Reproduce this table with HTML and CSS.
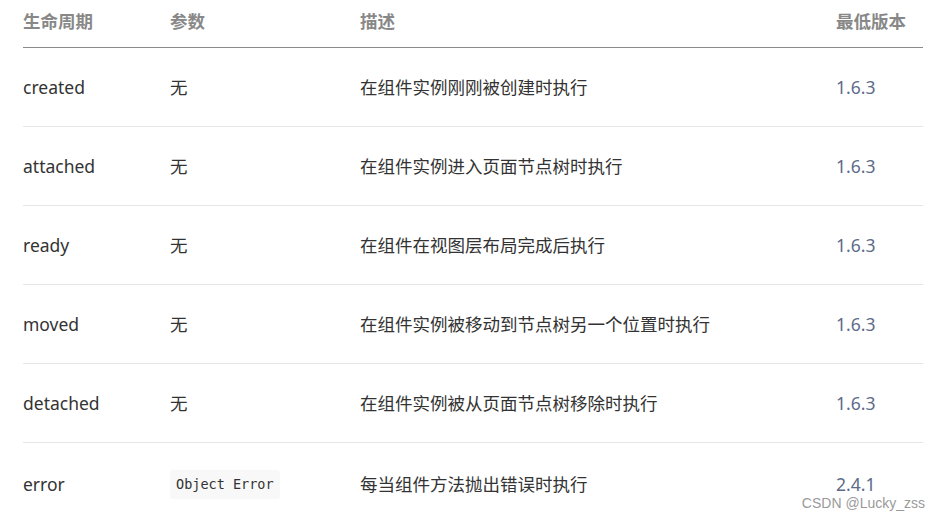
FILE: index.html
```html
<!DOCTYPE html>
<html lang="zh">
<head>
<meta charset="utf-8">
<link rel="stylesheet" href="styles.css">
</head>
<body>
<div class="page">
<table class="api">
  <thead>
    <tr><th class="c1">生命周期</th><th class="c2">参数</th><th class="c3">描述</th><th class="c4">最低版本</th></tr>
  </thead>
  <tbody>
    <tr><td>created</td><td>无</td><td>在组件实例刚刚被创建时执行</td><td class="ver">1.6.3</td></tr>
    <tr><td>attached</td><td>无</td><td>在组件实例进入页面节点树时执行</td><td class="ver">1.6.3</td></tr>
    <tr><td>ready</td><td>无</td><td>在组件在视图层布局完成后执行</td><td class="ver">1.6.3</td></tr>
    <tr><td>moved</td><td>无</td><td>在组件实例被移动到节点树另一个位置时执行</td><td class="ver">1.6.3</td></tr>
    <tr><td>detached</td><td>无</td><td>在组件实例被从页面节点树移除时执行</td><td class="ver">1.6.3</td></tr>
    <tr class="last"><td>error</td><td><code class="code">Object Error</code></td><td>每当组件方法抛出错误时执行</td><td class="ver">2.4.1</td></tr>
  </tbody>
</table>
<div class="watermark">CSDN @Lucky_zss</div>
</div>
</body>
</html>
```

FILE: styles.css
```css
html, body {
  margin: 0;
  padding: 0;
  background: #fff;
}
.page {
  position: relative;
  width: 941px;
  height: 521px;
  overflow: hidden;
  padding-left: 23px;
  box-sizing: border-box;
}
.api {
  border-collapse: collapse;
  table-layout: fixed;
  width: 900px;
  font-family: "Noto Sans", "Noto Sans CJK SC", sans-serif;
  font-size: 17.5px;
  color: #333;
}
.api th {
  text-align: left;
  font-weight: bold;
  color: #888;
  height: 47px;
  padding: 0 0 3px 0;
  vertical-align: middle;
  border-bottom: 1px solid #8a8a8a;
  box-sizing: border-box;
  line-height: 1;
}
.c1 { width: 147px; }
.c2 { width: 190px; }
.c3 { width: 476px; }
.c4 { width: 87px; }
.api td {
  padding: 2px 0 0 0;
  height: 76px;
  vertical-align: middle;
  border-bottom: 1px solid #e6e6e6;
  line-height: 1.3;
}
.api tr.last td {
  border-bottom: none;
  height: 80px;
}
.ver {
  color: #5d6b89;
}
.code {
  display: inline-block;
  font-family: "DejaVu Sans Mono", monospace;
  font-size: 13.5px;
  color: #333;
  background: #f8f8f8;
  border-radius: 3px;
  padding: 0 6px;
  line-height: 29px;
}
.watermark {
  position: absolute;
  right: 16px;
  bottom: 10px;
  font-family: "Liberation Sans", Arial, sans-serif;
  font-size: 14px;
  color: #9a9a9a;
}
```
